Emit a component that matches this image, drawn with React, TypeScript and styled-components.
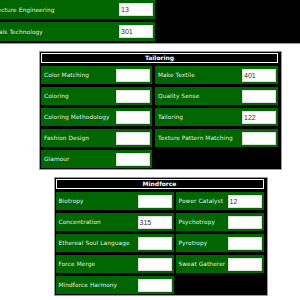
import React from 'react';
import styled, { createGlobalStyle } from 'styled-components';

type Skill = { name: string; value?: string };

type SkillTableProps = {
  title?: string;
  left: Skill[];
  right: Skill[];
  cols: string;
  gap?: number;
  rowHeight?: number;
  top?: boolean;
};

const topSkills: Skill[] = [
  { name: 'Architecture Engineering', value: '13' },
  { name: 'Materials Technology', value: '301' },
];

const tailoringLeft: Skill[] = [
  { name: 'Color Matching' },
  { name: 'Coloring' },
  { name: 'Coloring Methodology' },
  { name: 'Fashion Design' },
  { name: 'Glamour' },
];

const tailoringRight: Skill[] = [
  { name: 'Make Textile', value: '401' },
  { name: 'Quality Sense' },
  { name: 'Tailoring', value: '122' },
  { name: 'Texture Pattern Matching' },
];

const mindforceLeft: Skill[] = [
  { name: 'Biotropy' },
  { name: 'Concentration', value: '315' },
  { name: 'Ethereal Soul Language' },
  { name: 'Force Merge' },
  { name: 'Mindforce Harmony' },
];

const mindforceRight: Skill[] = [
  { name: 'Power Catalyst', value: '12' },
  { name: 'Psychotropy' },
  { name: 'Pyrotropy' },
  { name: 'Sweat Gatherer' },
];

function SkillTable({ title, left, right, cols, gap = 3, rowHeight = 18, top }: SkillTableProps) {
  const rows = Math.max(left.length, right.length);
  const cells: React.ReactNode[] = [];
  for (let i = 0; i < rows; i++) {
    [left[i], right[i]].forEach((skill, j) => {
      cells.push(
        skill ? (
          <Cell key={`${i}-${j}`} $h={rowHeight}>
            <Label>{skill.name}</Label>
            <ValueBox>{skill.value}</ValueBox>
          </Cell>
        ) : (
          <EmptyCell key={`${i}-${j}`} />
        ),
      );
    });
  }

  return (
    <Panel $top={top}>
      <Grid $cols={cols} $gap={gap}>
        {title && <PanelHeader>{title}</PanelHeader>}
        {cells}
      </Grid>
    </Panel>
  );
}

export default function App() {
  return (
    <>
      <GlobalStyle />
      <Page>
        <SkillTable top left={topSkills} right={[]} cols="178px 1fr" rowHeight={19} />
        <SkillTable title="Tailoring" left={tailoringLeft} right={tailoringRight} cols="111px 123px" />
        <SkillTable title="Mindforce" left={mindforceLeft} right={mindforceRight} cols="118px 88px" gap={2} />
      </Page>
    </>
  );
}

const GlobalStyle = createGlobalStyle`
  html, body {
    margin: 0;
    padding: 0;
    background: #ffffff;
    overflow: hidden;
  }
  body {
    font-family: "DejaVu Sans", Verdana, sans-serif;
  }
`;

const Page = styled.div`
  display: flex;
  flex-direction: column;
  align-items: center;
  gap: 7px;
  width: 321px;
`;

const Panel = styled.div<{ $top?: boolean }>`
  background: #000000;
  border: 1px solid #9a9a9a;
  padding: 1px 3px 1px 1px;
  ${(p) =>
    p.$top &&
    `
    align-self: flex-start;
    margin-left: -25px;
    width: 500px;
    border-top: none;
    padding-top: 0;
    padding-bottom: 2px;
  `}
`;

const Grid = styled.div<{ $cols: string; $gap: number }>`
  display: grid;
  grid-template-columns: ${(p) => p.$cols};
  column-gap: ${(p) => p.$gap}px;
  row-gap: 3px;
`;

const PanelHeader = styled.div`
  grid-column: 1 / -1;
  height: 10px;
  box-sizing: border-box;
  border: 1px solid #ffffff;
  color: #ffffff;
  font-size: 6px;
  font-weight: bold;
  line-height: 8px;
  text-align: center;
`;

const Cell = styled.div<{ $h: number }>`
  display: flex;
  align-items: center;
  justify-content: space-between;
  gap: 2px;
  height: ${(p) => p.$h}px;
  padding: 0 2px 0 3px;
  background: #006600;
  overflow: hidden;
`;

const EmptyCell = styled.div`
  background: transparent;
`;

const Label = styled.span`
  color: #e6eee6;
  font-size: 5.8px;
  letter-spacing: 0.1px;
  white-space: nowrap;
`;

const ValueBox = styled.div`
  flex-shrink: 0;
  width: 34px;
  height: 13px;
  box-sizing: border-box;
  background: #ffffff;
  border: 1px solid #dddddd;
  padding-left: 1px;
  font-family: "Liberation Sans", Arial, sans-serif;
  font-size: 7px;
  line-height: 11px;
  color: #333333;
`;
